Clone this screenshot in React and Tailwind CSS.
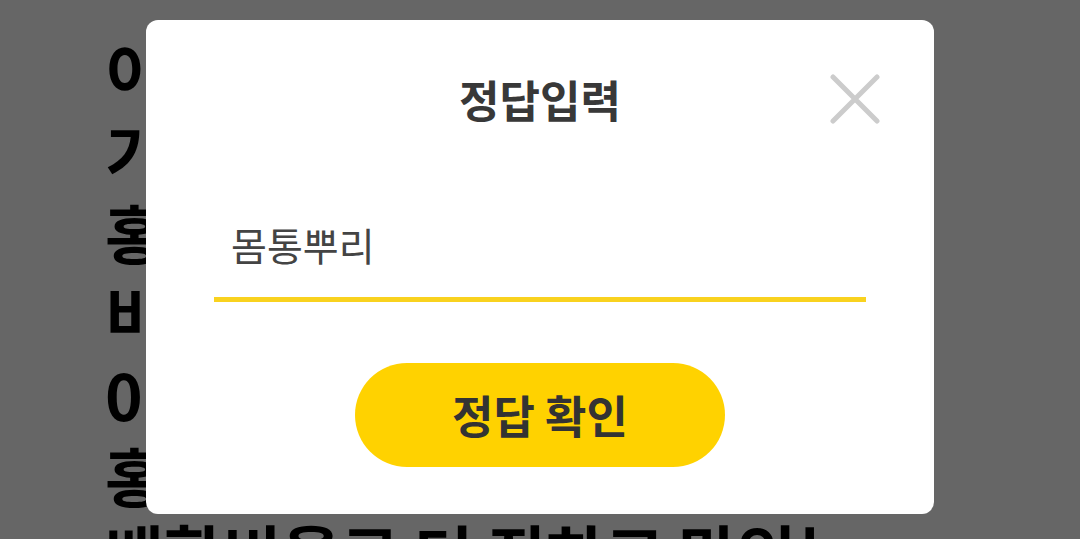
import React from "react";

const FONT = { fontFamily: '"Noto Sans CJK KR", "Noto Sans", sans-serif' };

export default function App() {
  const bgLines = [
    "이 제품은 지난",
    "기존 제품보다 홍",
    "홍삼의 뿌리를",
    "비롯한 원료로",
    "0.5% 이상 함유된",
    "홍삼 농축액을",
  ];
  return (
    <div
      className="relative w-[1080px] h-[539px] overflow-hidden bg-[#666666]"
      style={FONT}
    >
      <div className="pl-[105px] pt-[29px] text-black font-bold">
        {bgLines.map((l, i) => (
          <div key={i} className="text-[64px] leading-[81px] whitespace-nowrap">
            {l}
          </div>
        ))}
        <div className="-mt-[4px] text-[64px] leading-[81px] whitespace-nowrap">
          배합비율로 더 진하고 맛있는
        </div>
      </div>

      <div className="absolute left-[146px] top-[20px] w-[788px] h-[494px] rounded-[12px] bg-white flex flex-col items-center">
        <div className="relative w-full h-[158px] flex justify-center pt-[55px]">
          <div className="text-[44px] leading-[48px] font-bold text-[#383838]">
            정답입력
          </div>
          <svg
            className="absolute left-[684px] top-[54px]"
            width="50"
            height="50"
            viewBox="0 0 50 50"
          >
            <path
              d="M3 3 L47 47 M47 3 L3 47"
              stroke="#cccccc"
              strokeWidth="5"
              strokeLinecap="round"
            />
          </svg>
        </div>
        <div className="self-start ml-[68px] w-[652px] h-[124px] border-b-[5px] border-[#f9d21f] pl-[17px] pt-[42px]">
          <div className="text-[39px] leading-[48px] text-[#444444]">몸통뿌리</div>
        </div>
        <button className="mt-[61px] w-[370px] h-[104px] rounded-full bg-[#ffd200] flex items-center justify-center">
          <span className="text-[45px] font-bold text-[#333333] leading-[48px]">
            정답 확인
          </span>
        </button>
      </div>
    </div>
  );
}
